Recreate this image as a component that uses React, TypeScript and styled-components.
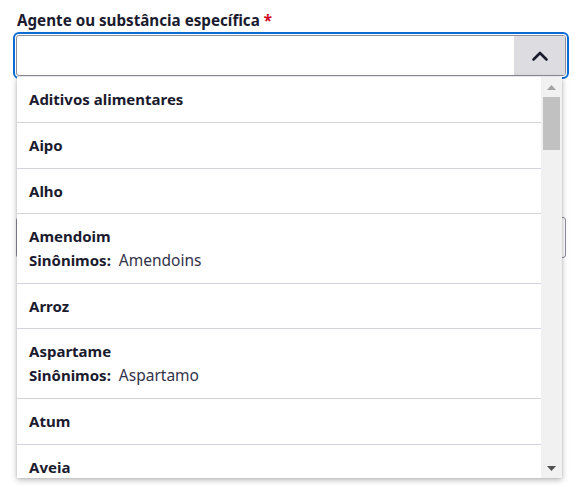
import React from 'react';
import styled, { createGlobalStyle } from 'styled-components';

const GlobalStyle = createGlobalStyle`
html, body, #root {
    height: 100%;
}

body {
    margin: 0;
    background: #fff;
    font-family: "Noto Sans", "Open Sans", Arial, sans-serif;
    color: #1b1b2f;
}
`;

interface OptionInterface {
    name: string
    synonyms?: string
}

const options: OptionInterface[] = [
    { name: "Aditivos alimentares" },
    { name: "Aipo" },
    { name: "Alho" },
    { name: "Amendoim", synonyms: "Amendoins" },
    { name: "Arroz" },
    { name: "Aspartame", synonyms: "Aspartamo" },
    { name: "Atum" },
    { name: "Aveia" },
];

const Page = styled.div`
display: flex;
flex-direction: column;
gap: 141px;
padding: 9px 16px 0 16px;
min-height: 100%;
box-sizing: border-box;
`;

const FieldLabel = styled.label`
display: block;
padding-left: 1px;
margin-bottom: 4px;
font-size: 15.2px;
font-weight: 700;
line-height: 22px;
color: #1b1b2f;

span {
    color: #d0021b;
}
`;

const Combo = styled.div`
position: relative;
`;

const InputBox = styled.div<{ focused?: boolean }>`
display: flex;
height: 39px;
border: 1px solid #8d8d9c;
border-radius: 3px;
background: #fff;
overflow: hidden;
${({ focused }) => focused ? "outline: 2px solid #0b6bd3; outline-offset: 1px;" : ""}
`;

const InputText = styled.div`
flex: 1;
`;

const ToggleButton = styled.div`
display: flex;
align-items: center;
justify-content: center;
width: 51px;
background: #dcdce1;
`;

const Listbox = styled.div`
position: absolute;
top: 42px;
left: 1px;
right: 4px;
height: 401px;
display: flex;
background: #fff;
box-shadow: 0 2px 6px rgba(0, 0, 0, 0.28), 0 0 2px rgba(0, 0, 0, 0.12);
overflow: hidden;
z-index: 2;
`;

const OptionList = styled.div`
flex: 1;
display: flex;
flex-direction: column;
`;

const OptionItem = styled.div`
padding: 12px 12px 11.6px 12px;
border-bottom: 1px solid #d3d3de;
flex: 0 0 auto;

&:first-child {
    padding-top: 12.4px;
}
`;

const OptionName = styled.div`
font-size: 15px;
font-weight: 700;
line-height: 21px;
color: #1b1b2f;
`;

const OptionSynonym = styled.div`
margin-top: 3px;
font-size: 15.5px;
line-height: 21px;
color: #33334a;

b {
    font-size: 15px;
    font-weight: 700;
    color: #1b1b2f;
    margin-right: 8px;
}
`;

const Scrollbar = styled.div`
width: 21px;
display: flex;
flex-direction: column;
align-items: center;
background: #f1f1f1;
`;

const ScrollArrow = styled.div`
height: 20px;
display: flex;
align-items: center;
justify-content: center;
`;

const ScrollTrack = styled.div`
flex: 1;
align-self: stretch;
padding: 0 2px 0 2px;
`;

const ScrollThumb = styled.div`
height: 53px;
background: #c1c1c1;
`;

const Chevron = () => (
    <svg width="18" height="12" viewBox="0 0 18 12">
        <path d="M2.5 9.5 L9 3 L15.5 9.5" fill="none" stroke="#1b1b2f" strokeWidth="2.6" strokeLinecap="round" strokeLinejoin="round" />
    </svg>
);

const Triangle: React.FC<{ up?: boolean, color: string }> = ({ up, color }) => (
    <svg width="9" height="5" viewBox="0 0 9 5">
        <path d={up ? "M0 5 L4.5 0 L9 5 Z" : "M0 0 L9 0 L4.5 5 Z"} fill={color} />
    </svg>
);

const App: React.FC = () => {
    return <>
        <GlobalStyle />
        <Page>
            <div>
                <FieldLabel>Agente ou substância específica <span>*</span></FieldLabel>
                <Combo>
                    <InputBox focused>
                        <InputText />
                        <ToggleButton><Chevron /></ToggleButton>
                    </InputBox>
                    <Listbox>
                        <OptionList>
                            {options.map(item => (
                                <OptionItem key={item.name}>
                                    <OptionName>{item.name}</OptionName>
                                    {item.synonyms && <OptionSynonym><b>Sinônimos:</b>{item.synonyms}</OptionSynonym>}
                                </OptionItem>
                            ))}
                        </OptionList>
                        <Scrollbar>
                            <ScrollArrow><Triangle up color="#a3a3a3" /></ScrollArrow>
                            <ScrollTrack><ScrollThumb /></ScrollTrack>
                            <ScrollArrow><Triangle color="#505050" /></ScrollArrow>
                        </Scrollbar>
                    </Listbox>
                </Combo>
            </div>
            <div>
                <InputBox />
            </div>
        </Page>
    </>
}

export default App;
